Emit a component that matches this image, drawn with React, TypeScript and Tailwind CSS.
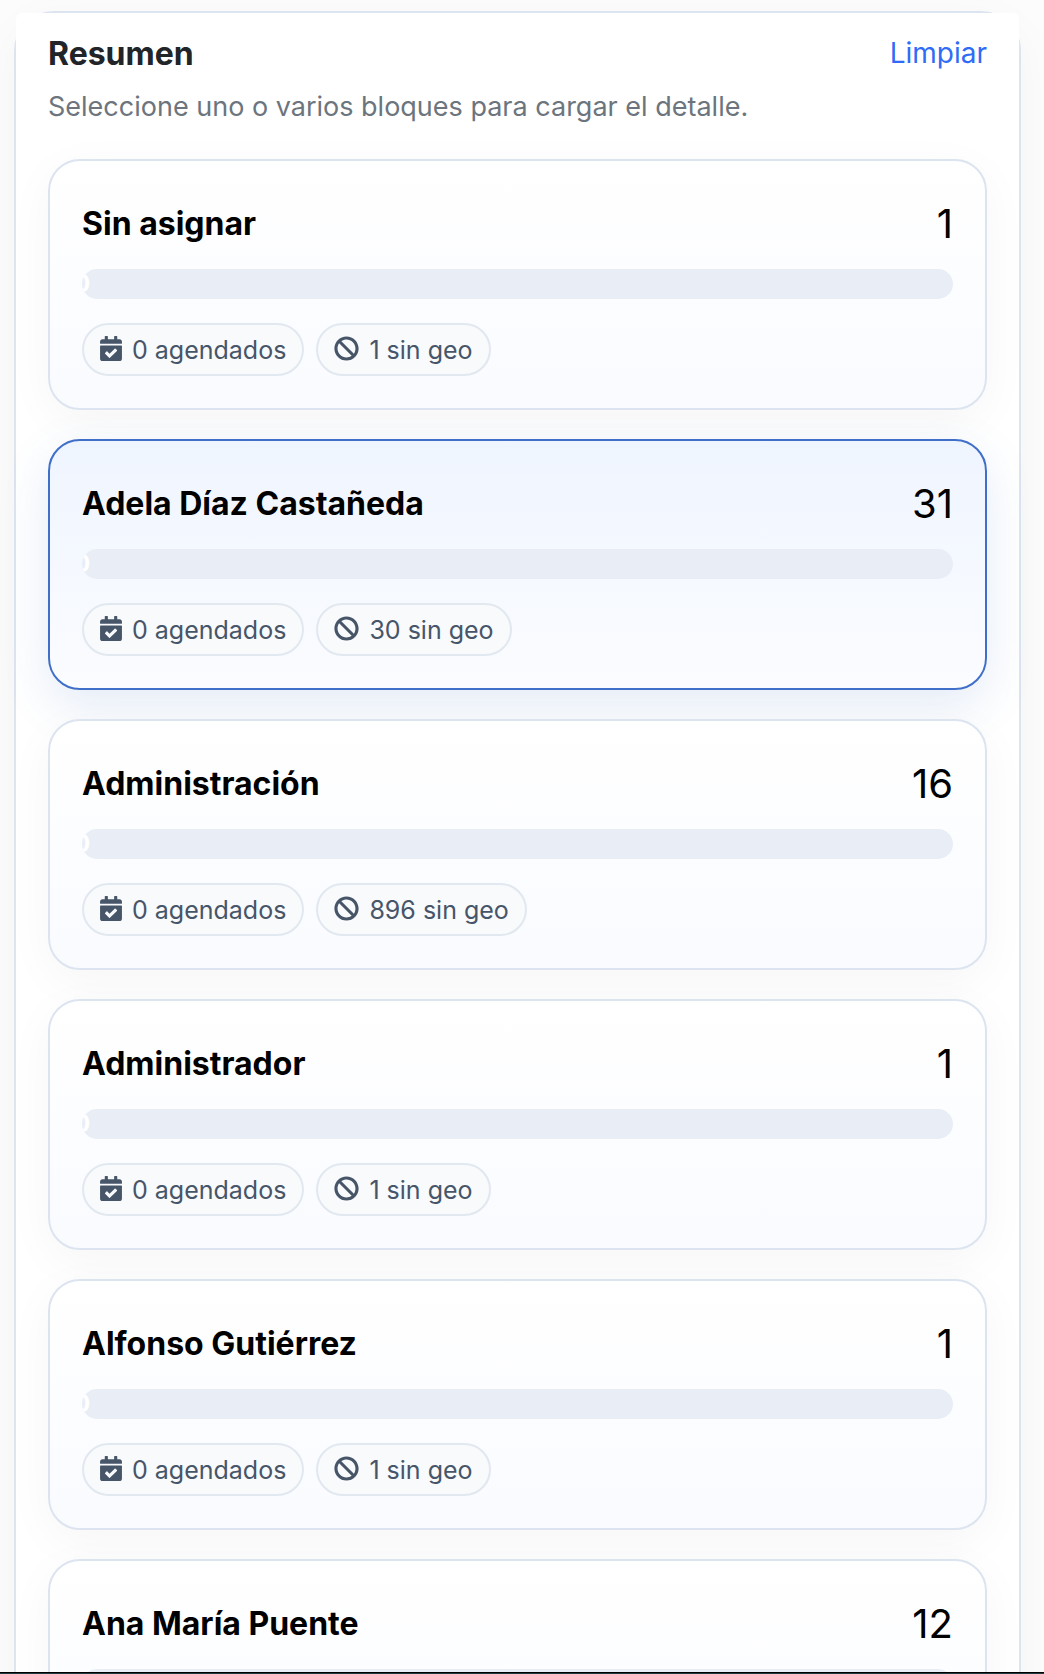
import { useState } from 'react';
import { FaBan, FaCalendarCheck } from 'react-icons/fa';

type Bloque = {
  id: string;
  nombre: string;
  total: number;
  agendados: number;
  sinGeo: number;
};

const bloques: Bloque[] = [
  { id: 'sin-asignar', nombre: 'Sin asignar', total: 1, agendados: 0, sinGeo: 1 },
  { id: 'adela', nombre: 'Adela Díaz Castañeda', total: 31, agendados: 0, sinGeo: 30 },
  { id: 'administracion', nombre: 'Administración', total: 16, agendados: 0, sinGeo: 896 },
  { id: 'administrador', nombre: 'Administrador', total: 1, agendados: 0, sinGeo: 1 },
  { id: 'alfonso', nombre: 'Alfonso Gutiérrez', total: 1, agendados: 0, sinGeo: 1 },
  { id: 'ana', nombre: 'Ana María Puente', total: 12, agendados: 0, sinGeo: 12 },
];

function Pill({ children }: { children: React.ReactNode }) {
  return (
    <span className="flex items-center gap-[10px] rounded-full border-2 border-[#e2e8f0] bg-[#f8fafc] px-4 pt-[9px] pb-[7px] text-[25px] leading-[33px] text-[#475569]">
      {children}
    </span>
  );
}

function BloqueCard({
  bloque,
  selected,
  onToggle,
}: {
  bloque: Bloque;
  selected: boolean;
  onToggle: () => void;
}) {
  const avance = (bloque.agendados / bloque.total) * 100;

  return (
    <button
      type="button"
      aria-pressed={selected}
      onClick={onToggle}
      className={`block w-full shrink-0 rounded-[32px] border-2 p-8 text-left text-black ${
        selected
          ? 'border-[#3f6fc8] bg-linear-to-b from-[#eff5ff] to-[#fbfcff] shadow-[0_16px_48px_rgba(63,111,200,0.14)]'
          : 'border-[#dce4f0] bg-linear-to-b from-white to-[#f9fbff] shadow-[0_12px_48px_rgba(0,0,0,0.04)]'
      }`}
    >
      <span className="flex items-center justify-between gap-4 pb-[14px]">
        <span className="text-[32px] leading-[62px] font-bold">{bloque.nombre}</span>
        <span className="text-[40px] leading-[62px]">{bloque.total}</span>
      </span>

      {/* Progress track, the label is centered on the filled part */}
      <span className="flex h-[30px] overflow-hidden rounded-full bg-[#e9eef6]">
        <span
          className="flex items-center justify-center bg-[#3f6fc8] text-2xl font-bold text-white"
          style={{ width: `${avance}%` }}
        >
          {bloque.agendados}
        </span>
      </span>

      <span className="mt-6 flex flex-wrap gap-3">
        <Pill>
          <FaCalendarCheck className="mb-1 w-[22px]" />
          {bloque.agendados} agendados
        </Pill>
        <Pill>
          <FaBan className="mb-1" />
          {bloque.sinGeo} sin geo
        </Pill>
      </span>
    </button>
  );
}

export default function App() {
  const [selected, setSelected] = useState<string[]>(['adela']);

  const toggle = (id: string) => {
    setSelected((prev) => (prev.includes(id) ? prev.filter((s) => s !== id) : [...prev, id]));
  };

  return (
    <div className="flex h-screen flex-col bg-[#fcfcfc] font-['Inter',sans-serif]">
      <main className="min-h-0 flex-1 overflow-hidden pt-[11px] pr-[23px] pl-[14px]">
        <section className="rounded-[40px] border-2 border-[#dce4f0] bg-white pb-8 shadow-[0_12px_48px_rgba(0,0,0,0.04)]">
          <header className="rounded-md bg-white px-8 pt-5 pb-6">
            <div className="flex items-start justify-between">
              <h2 className="text-[32px] leading-[42px] font-bold text-[#212529]">Resumen</h2>
              <button
                type="button"
                onClick={() => setSelected([])}
                className="text-[28px] leading-[40px] text-[#2f6bf6]"
              >
                Limpiar
              </button>
            </div>
            <p className="mt-3 text-[27px] leading-[40px] text-[#6c757d]">
              Seleccione uno o varios bloques para cargar el detalle.
            </p>
          </header>

          <div className="flex flex-col gap-[29px] px-8 pt-2">
            {bloques.map((bloque) => (
              <BloqueCard
                key={bloque.id}
                bloque={bloque}
                selected={selected.includes(bloque.id)}
                onToggle={() => toggle(bloque.id)}
              />
            ))}
          </div>
        </section>
      </main>
      <footer className="h-[2px] shrink-0 border-t border-black bg-[#1f3b40]" />
    </div>
  );
}
